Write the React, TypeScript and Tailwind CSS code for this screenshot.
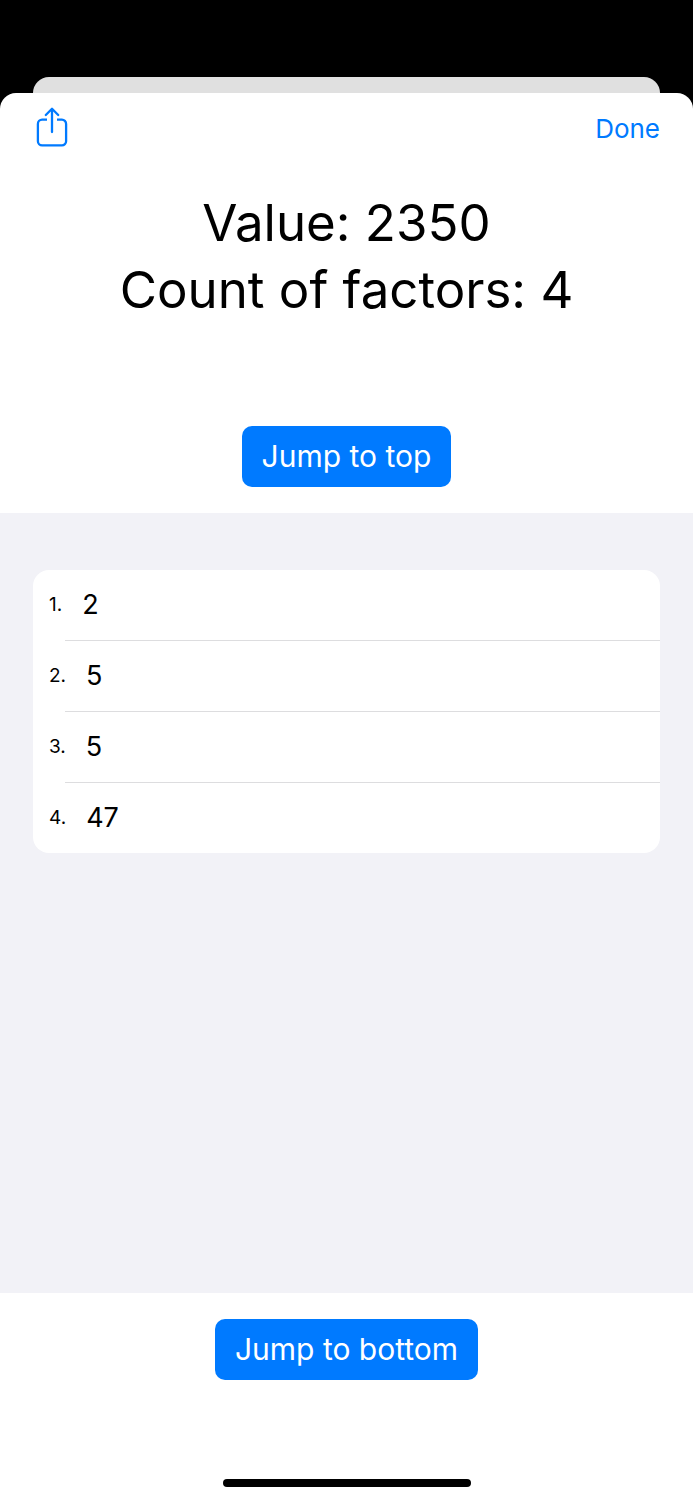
import type { ReactNode } from 'react'

const value = 2350
const factors = [2, 5, 5, 47]

function ShareIcon() {
  return (
    <svg
      width="32"
      height="40"
      viewBox="0 0 32 40"
      fill="none"
      stroke="currentColor"
      strokeWidth="2.3"
      strokeLinecap="round"
      strokeLinejoin="round"
      aria-hidden="true"
    >
      <path d="M11 12.7H6.1a4.2 4.2 0 0 0-4.2 4.2v17.3a4.2 4.2 0 0 0 4.2 4.2h19.8a4.2 4.2 0 0 0 4.2-4.2V16.9a4.2 4.2 0 0 0-4.2-4.2H21" strokeLinecap="butt" />
      <path d="M16 25V2M9.8 8 16 1.8 22.2 8" />
    </svg>
  )
}

function JumpButton({ children }: { children: ReactNode }) {
  return (
    <button type="button" className="rounded-[10px] bg-[#007aff] px-5 py-3 text-[30px] leading-[37px] text-white">
      {children}
    </button>
  )
}

function FactorList() {
  return (
    <ol className="overflow-hidden rounded-2xl bg-white">
      {factors.map((factor, i) => (
        <li key={i}>
          {i > 0 && <div className="ml-8 h-px bg-[#dddddf]" />}
          <div className="flex h-[70px] items-center gap-5 px-4">
            <span className="text-[19px]">{i + 1}.</span>
            <span className="text-[27px]">{factor}</span>
          </div>
        </li>
      ))}
    </ol>
  )
}

export default function App() {
  return (
    <div className="flex min-h-screen flex-col bg-black pt-[77px] font-['Inter',sans-serif] text-black">
      <div className="mx-[33px] h-4 rounded-t-2xl bg-[#e0e0e0]" />
      <div className="flex grow flex-col rounded-t-2xl bg-white">
        <header className="flex h-[72px] items-start justify-between px-[33px] pt-[14px] text-[#007aff]">
          <button type="button" aria-label="Share" className="ml-[3px]">
            <ShareIcon />
          </button>
          <button type="button" className="text-[26px] leading-[44px]">
            Done
          </button>
        </header>

        <section className="flex flex-col items-center pt-6 pb-[26px]">
          <h1 className="mb-[103px] text-center text-[51px] leading-[67px]">
            Value: {value}
            <br />
            Count of factors: {factors.length}
          </h1>
          <JumpButton>Jump to top</JumpButton>
        </section>

        <main className="grow bg-[#f2f2f7] px-[33px] py-[57px]">
          <FactorList />
        </main>

        <footer className="flex flex-col items-center pt-[26px] pb-[13px]">
          <JumpButton>Jump to bottom</JumpButton>
          <div className="mt-[99px] h-2 w-[248px] rounded-full bg-black" />
        </footer>
      </div>
    </div>
  )
}
